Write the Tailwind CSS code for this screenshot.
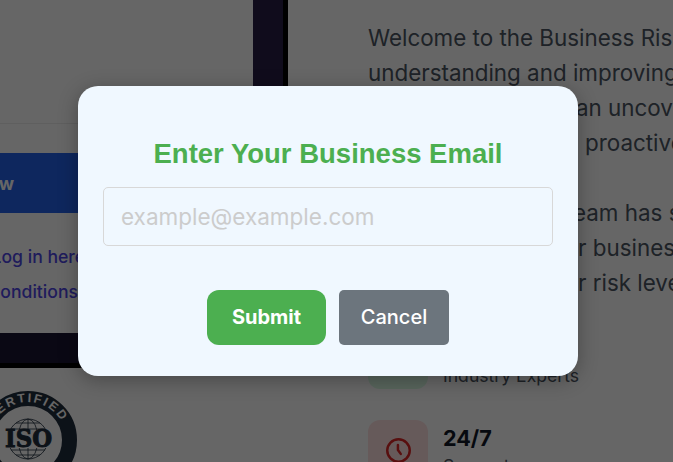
<!DOCTYPE html>
<html>
<head>
<meta charset="utf-8">
<script src="https://cdn.jsdelivr.net/npm/@tailwindcss/browser@4"></script>
</head>
<body class="bg-white overflow-hidden font-['Inter',sans-serif]">
<div class="relative w-[673px] h-[462px] overflow-hidden flex bg-white">
  <!-- left column -->
  <div class="w-[368px] shrink-0 flex flex-col">
    <div class="w-[288px] h-[368px] shrink-0">
      <div class="-mt-[10px] -ml-[10px] w-[293px] h-[373px] bg-white border-r-[30px] border-b-[30px] border-r-[#2a1e46] border-b-[#191432] shadow-[5px_5px_0_#000] flex flex-col">
        <div class="h-[134px] shrink-0 border-b border-[#eeeeee]"></div>
        <div class="mt-[29px] h-[60px] shrink-0 bg-[#2563eb] flex items-center justify-end pr-[239px] text-white font-bold text-[18px]">Review</div>
        <div class="mt-[26px] ml-[-57px] whitespace-nowrap text-[#4f46e5] font-medium text-[17.6px] leading-[35px]">
          <p class="-ml-[77px]">Already a user? Log in here</p>
          <p class="-ml-[19px]">Terms &amp; Conditions</p>
        </div>
      </div>
    </div>
    <div class="pt-[22px]">
      <svg width="100" height="80" viewBox="0 0 100 80" class="block overflow-visible">
        <circle cx="28" cy="50" r="41.5" fill="none" stroke="#1f2d3d" stroke-width="15"/>
        <defs><path id="arc" d="M -10 50 A 38 38 0 0 1 66 50"/></defs>
        <text font-family="Liberation Sans, sans-serif" font-weight="700" font-size="12.5" fill="#ffffff" letter-spacing="2"><textPath href="#arc" startOffset="17">CERTIFIED</textPath></text>
        <g fill="none" stroke="#1f2d3d" stroke-width="0.8">
          <circle cx="28" cy="49" r="20"/>
          <ellipse cx="28" cy="49" rx="10" ry="20"/>
          <path d="M28 29V69M11 39H45M11 60H45M16 33H40M16 65H40"/>
        </g>
        <rect x="4" y="40" width="48" height="18" fill="#ffffff"/>
        <text x="5" y="57" textLength="47" lengthAdjust="spacingAndGlyphs" font-family="DejaVu Serif, serif" font-weight="700" font-size="23.5" stroke="#1f2d3d" stroke-width="0.9" fill="#1f2d3d">ISO</text>
      </svg>
    </div>
  </div>
  <!-- right column -->
  <div class="flex-1 min-w-0 whitespace-nowrap">
    <div class="pt-[20px] text-[#4b5563] text-[22.4px] leading-[35px]">
      <p>Welcome to the Business Risk Assessment</p>
      <p>understanding and improving your business</p>
      <p class="pl-[208px]">an uncover hidden risks</p>
      <p class="pl-[217px]">proactive steps</p>
      <p class="mt-[35px] pl-[205px]">eam has supported</p>
      <p class="pl-[210px]">r business</p>
      <p class="pl-[210px]">r risk level</p>
    </div>
    <div class="mt-[29px] flex flex-col gap-[31px]">
      <div class="flex gap-[15px]">
        <div class="w-[60px] h-[60px] rounded-xl bg-[#dcfce7] shrink-0"></div>
        <div class="pt-[4px]">
          <p class="text-[#111827] font-bold text-[21.6px] leading-[30px]">50+</p>
          <p class="text-[#4b5563] text-[17.6px] leading-[26px]">Industry Experts</p>
        </div>
      </div>
      <div class="flex gap-[15px]">
        <div class="w-[60px] h-[60px] rounded-xl bg-[#fee2e2] shrink-0 flex items-center justify-center">
          <svg width="27" height="27" viewBox="0 0 24 24" fill="none" stroke="#dc2626" stroke-width="2.2" stroke-linecap="round" stroke-linejoin="round"><circle cx="12" cy="12" r="10"/><path d="M11.5 7v4.5l2.5 3.5"/></svg>
        </div>
        <div class="pt-[3px]">
          <p class="text-[#111827] font-bold text-[21.6px] leading-[30px]">24/7</p>
          <p class="text-[#4b5563] text-[17.6px] leading-[26px]">Support</p>
        </div>
      </div>
    </div>
  </div>
  <!-- overlay + modal -->
  <div class="absolute inset-0 bg-black/60 flex items-center justify-center pr-[17px]">
    <div class="w-[500px] h-[290px] bg-[#f0f8ff] rounded-[20px] p-[25px] shadow-[0_4px_20px_rgba(0,0,0,0.3)] flex flex-col">
      <h2 class="mt-[27px] text-center font-['Liberation_Sans',sans-serif] font-bold text-[27.5px] leading-[32px] text-[#4caf50]">Enter Your Business Email</h2>
      <input type="email" placeholder="example@example.com" class="mt-[17px] w-full h-[59px] shrink-0 px-[17px] border border-[#d8d8d8] rounded-[5px] text-[22.5px] placeholder:text-[#cccccc] bg-transparent outline-none">
      <div class="mt-[44px] flex justify-center gap-[13px]">
        <button class="w-[119px] h-[55px] pb-[2px] rounded-[12px] bg-[#4caf50] text-white font-bold text-[20px]">Submit</button>
        <button class="w-[110px] h-[55px] pb-[2px] rounded-[5px] bg-[#6c757d] text-white font-medium text-[20px]">Cancel</button>
      </div>
    </div>
  </div>
</div>
</body>
</html>
